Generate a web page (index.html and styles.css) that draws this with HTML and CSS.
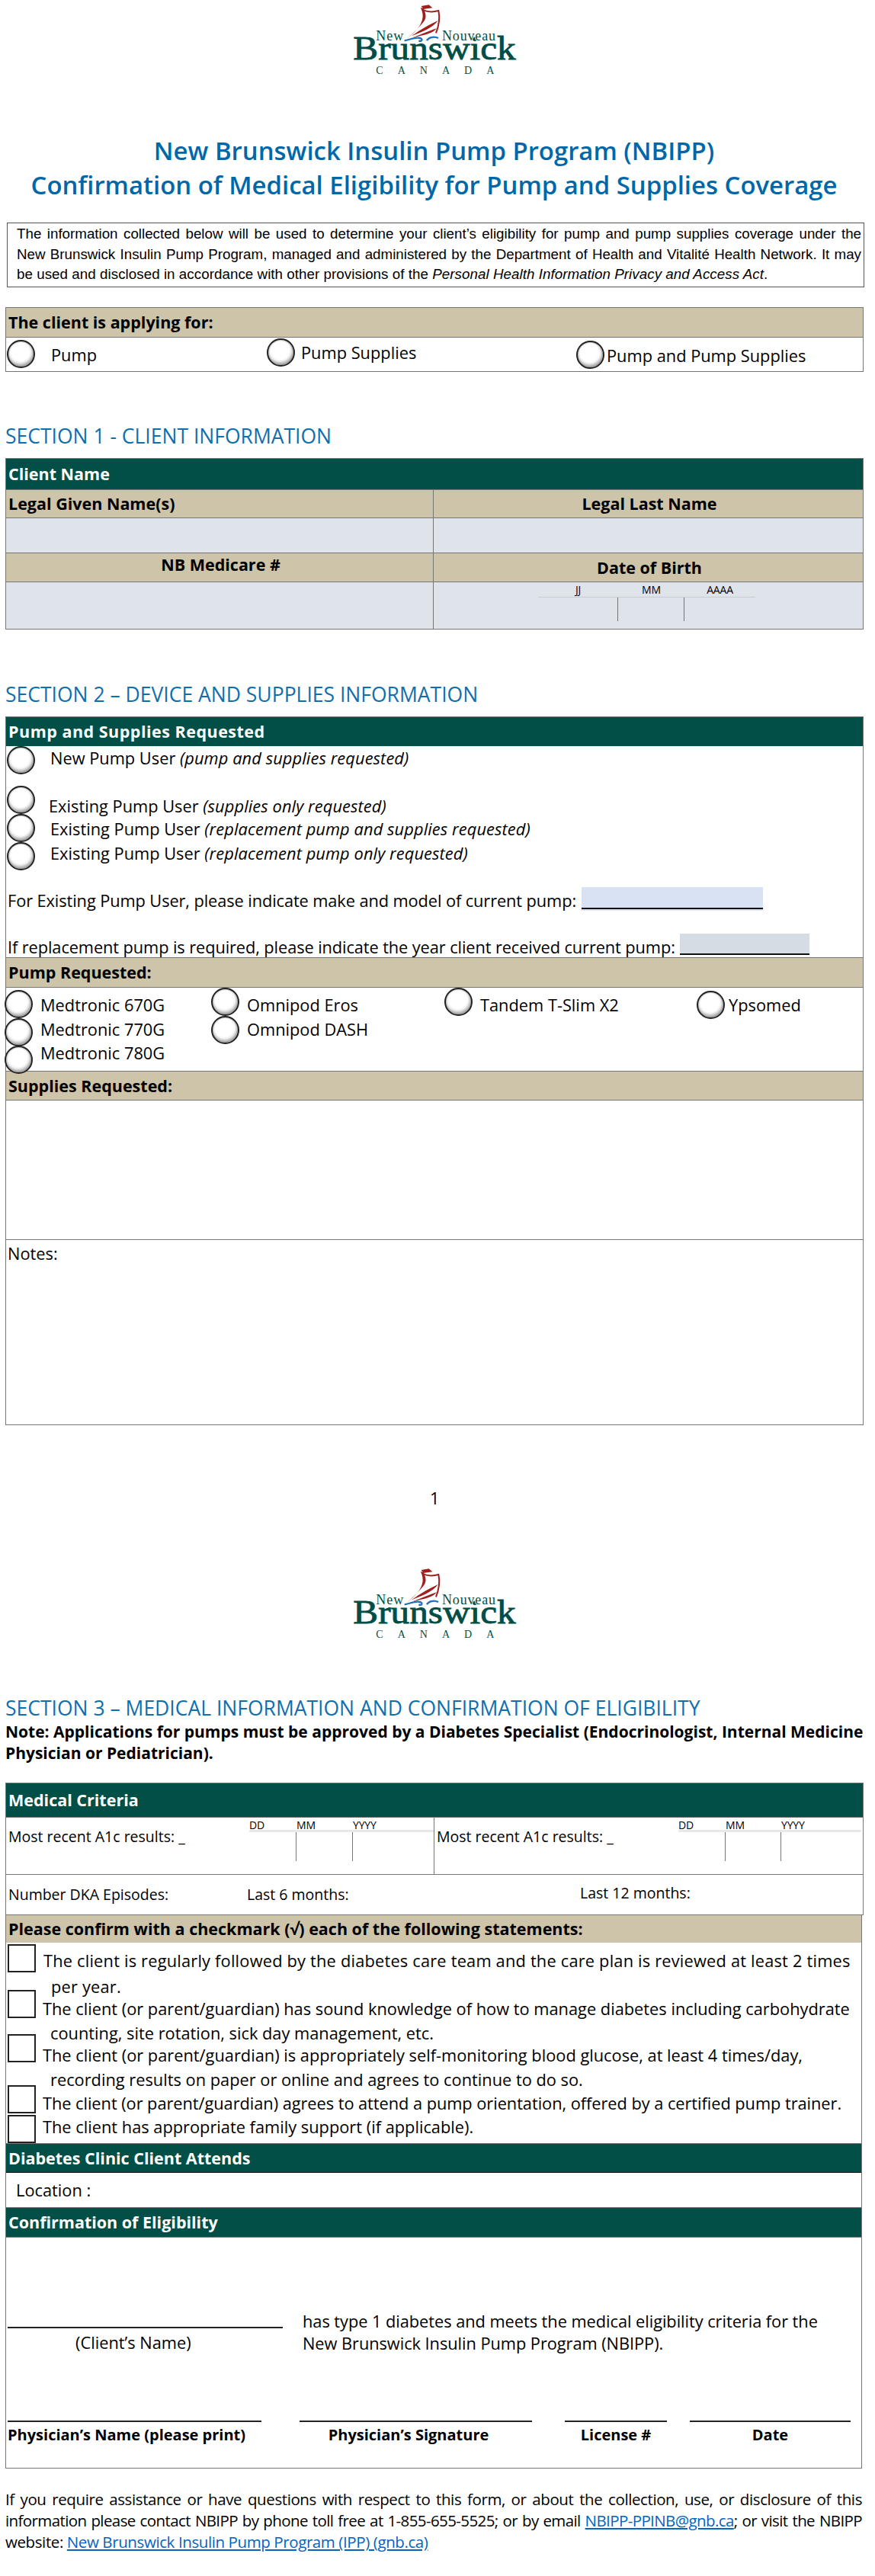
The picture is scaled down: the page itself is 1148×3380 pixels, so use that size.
FILE: index.html
```html
<!DOCTYPE html>
<html lang="en">
<head>
<meta charset="utf-8">
<title>NBIPP Confirmation of Medical Eligibility</title>
<link rel="stylesheet" href="styles.css">
</head>
<body>
<div class="page">
  <svg class="logo" viewBox="0 0 780 315" aria-label="New Brunswick Canada">
    <path class="sail" d="M338 24L368 19L382 31L346 36Z"/>
    <path class="sail" d="M335 30C352 62 350 100 282 152C318 120 330 105 342 92C366 70 352 48 348 34Z"/>
    <path class="sail-line" d="M340 36C360 48 385 48 406 42C412 70 408 100 396 130"/>
    <path class="sail" d="M300 142C335 115 375 95 405 80C380 112 340 125 300 142Z"/>
    <path class="sail" d="M285 155C330 140 370 120 398 112C385 135 330 140 285 155Z"/>
    <path class="wave" d="M272 160C300 155 310 145 335 150C345 155 340 165 328 160M405 150C385 140 365 150 360 160"/>
    <text class="logo-text logo-main" x="70" y="234" font-size="130" textLength="640" lengthAdjust="spacingAndGlyphs">Brunswick</text>
    <text class="logo-text logo-top" x="160" y="160" font-size="54" textLength="108">New</text>
    <text class="logo-text logo-top" x="420" y="160" font-size="54" textLength="210">Nouveau</text>
    <text class="logo-text" x="160" y="290" font-size="42" textLength="465">CANADA</text>
  </svg>
  <h1 class="title">New Brunswick Insulin Pump Program (NBIPP)<br>Confirmation of Medical Eligibility for Pump and Supplies Coverage</h1>
  <div class="info">
    <div class="jl">The information collected below will be used to determine your client’s eligibility for pump and pump supplies coverage under the</div>
    <div class="jl">New Brunswick Insulin Pump Program, managed and administered by the Department of Health and Vitalité Health Network. It may</div>
    <div class="il3">be used and disclosed in accordance with other provisions of the <em>Personal Health Information Privacy and Access Act</em>.</div>
  </div>

  <section class="frame apply">
    <div class="band tan h39">The client is applying for:</div>
    <div class="apply-row">
      <div class="opt a1"><span class="radio"></span><span>Pump</span></div>
      <div class="opt a2"><span class="radio"></span><span>Pump Supplies</span></div>
      <div class="opt a3"><span class="radio"></span><span>Pump and Pump Supplies</span></div>
    </div>
  </section>

  <h2 class="section s1">SECTION 1 - CLIENT INFORMATION</h2>
  <section class="frame client">
    <div class="band dark h41">Client Name</div>
    <div class="two">
      <div class="band tan h37 cell-l">Legal Given Name(s)</div>
      <div class="band tan h37 centered">Legal Last Name</div>
      <div class="fill h46 cell-l"></div>
      <div class="fill h46"></div>
      <div class="band tan h38 cell-l centered up">NB Medicare #</div>
      <div class="band tan h38 centered">Date of Birth</div>
      <div class="fill h62 cell-l"></div>
      <div class="fill h62">
        <div class="dob">
          <span class="mini">JJ</span><span class="mini">MM</span><span class="mini">AAAA</span>
          <span class="slot sep"></span><span class="slot sep"></span><span class="slot"></span>
        </div>
      </div>
    </div>
  </section>

  <h2 class="section s2">SECTION 2 – DEVICE AND SUPPLIES INFORMATION</h2>
  <section class="frame device">
    <div class="band dark h39 wide">Pump and Supplies Requested</div>
    <div class="opt u1"><span class="radio"></span><span>New Pump User <em>(pump and supplies requested)</em></span></div>
    <div class="opt u2"><span class="radio"></span><span>Existing Pump User <em>(supplies only requested)</em></span></div>
    <div class="opt u3"><span class="radio"></span><span>Existing Pump User <em>(replacement pump and supplies requested)</em></span></div>
    <div class="opt u4"><span class="radio"></span><span>Existing Pump User <em>(replacement pump only requested)</em></span></div>
    <div class="ask a-make"><span class="ask-label">For Existing Pump User, please indicate make and model of current pump:</span><span class="field f-make"></span></div>
    <div class="ask a-year"><span class="ask-label">If replacement pump is required, please indicate the year client received current pump:</span><span class="field f-year"></span></div>
    <div class="band tan h39">Pump Requested:</div>
    <div class="pumps">
      <div class="pump-col c1">
        <div class="opt p"><span class="radio dy-4"></span><span>Medtronic 670G</span></div>
        <div class="opt p"><span class="radio dy1"></span><span>Medtronic 770G</span></div>
        <div class="opt p"><span class="radio dy6"></span><span>Medtronic 780G</span></div>
      </div>
      <div class="pump-col c2">
        <div class="opt p"><span class="radio dy-7"></span><span>Omnipod Eros</span></div>
        <div class="opt p"><span class="radio dy-2"></span><span>Omnipod DASH</span></div>
      </div>
      <div class="pump-col c3">
        <div class="opt p"><span class="radio dy-7"></span><span>Tandem T-Slim X2</span></div>
      </div>
      <div class="pump-col c4">
        <div class="opt p"><span class="radio dy-3"></span><span>Ypsomed</span></div>
      </div>
    </div>
    <div class="band tan h38">Supplies Requested:</div>
    <div class="supplies"></div>
    <div class="notes">Notes:</div>
  </section>

  <div class="pageno">1</div>

  <svg class="logo logo2" viewBox="0 0 780 315" aria-label="New Brunswick Canada">
    <path class="sail" d="M338 24L368 19L382 31L346 36Z"/>
    <path class="sail" d="M335 30C352 62 350 100 282 152C318 120 330 105 342 92C366 70 352 48 348 34Z"/>
    <path class="sail-line" d="M340 36C360 48 385 48 406 42C412 70 408 100 396 130"/>
    <path class="sail" d="M300 142C335 115 375 95 405 80C380 112 340 125 300 142Z"/>
    <path class="sail" d="M285 155C330 140 370 120 398 112C385 135 330 140 285 155Z"/>
    <path class="wave" d="M272 160C300 155 310 145 335 150C345 155 340 165 328 160M405 150C385 140 365 150 360 160"/>
    <text class="logo-text logo-main" x="70" y="234" font-size="130" textLength="640" lengthAdjust="spacingAndGlyphs">Brunswick</text>
    <text class="logo-text logo-top" x="160" y="160" font-size="54" textLength="108">New</text>
    <text class="logo-text logo-top" x="420" y="160" font-size="54" textLength="210">Nouveau</text>
    <text class="logo-text" x="160" y="290" font-size="42" textLength="465">CANADA</text>
  </svg>

  <h2 class="section s3">SECTION 3 – MEDICAL INFORMATION AND CONFIRMATION OF ELIGIBILITY</h2>
  <p class="note">Note: Applications for pumps must be approved by a Diabetes Specialist (Endocrinologist, Internal Medicine<br>Physician or Pediatrician).</p>

  <section class="frame medical">
    <div class="band dark h45">Medical Criteria</div>
    <div class="a1c-row">
      <div class="a1c cell-l">
        <span class="a1c-text">Most recent A1c results: _</span>
        <div class="ymd ymd-l">
          <span class="mini-l">DD</span><span class="mini-l">MM</span><span class="mini-l">YYYY</span>
          <span class="slot2 sep"></span><span class="slot2 sep"></span><span class="slot2"></span>
        </div>
      </div>
      <div class="a1c">
        <span class="a1c-text">Most recent A1c results: _</span>
        <div class="ymd ymd-r">
          <span class="mini-l">DD</span><span class="mini-l">MM</span><span class="mini-l">YYYY</span>
          <span class="slot2 sep"></span><span class="slot2 sep"></span><span class="slot2"></span>
        </div>
      </div>
    </div>
    <div class="dka">
      <span class="dka-a">Number DKA Episodes:</span>
      <span class="dka-b">Last 6 months:</span>
      <span class="dka-c">Last 12 months:</span>
    </div>
  </section>

  <section class="frame confirm">
    <div class="band tan h37">Please confirm with a checkmark (√) each of the following statements:</div>
    <div class="stmt st1"><span class="box"></span><div class="lines"><div>The client is regularly followed by the diabetes care team and the care plan is reviewed at least 2 times</div><div class="hang">per year.</div></div></div>
    <div class="stmt st2"><span class="box"></span><div class="lines"><div>The client (or parent/guardian) has sound knowledge of how to manage diabetes including carbohydrate</div><div class="hang">counting, site rotation, sick day management, etc.</div></div></div>
    <div class="stmt st3"><span class="box"></span><div class="lines"><div>The client (or parent/guardian) is appropriately self-monitoring blood glucose, at least 4 times/day,</div><div class="hang">recording results on paper or online and agrees to continue to do so.</div></div></div>
    <div class="stmt st4"><span class="box"></span><div class="lines"><div>The client (or parent/guardian) agrees to attend a pump orientation, offered by a certified pump trainer.</div></div></div>
    <div class="stmt st5"><span class="box"></span><div class="lines"><div>The client has appropriate family support (if applicable).</div></div></div>
    <div class="band dark h38">Diabetes Clinic Client Attends</div>
    <div class="location">Location :</div>
    <div class="band dark h39">Confirmation of Eligibility</div>
    <div class="attest">
      <div class="attest-row">
        <div class="client-sign"><div class="sign-line"></div><div class="caption">(Client’s Name)</div></div>
        <div class="statement">has type 1 diabetes and meets the medical eligibility criteria for the<br>New Brunswick Insulin Pump Program (NBIPP).</div>
      </div>
      <div class="signs">
        <div class="sign g1">Physician’s Name (please print)</div>
        <div class="sign g2">Physician’s Signature</div>
        <div class="sign g3">License #</div>
        <div class="sign g4">Date</div>
      </div>
    </div>
  </section>

  <div class="foot">
    <div class="jl fl1">If you require assistance or have questions with respect to this form, or about the collection, use, or disclosure of this</div>
    <div class="jl fl2">information please contact NBIPP by phone toll free at 1-855-655-5525; or by email <a href="#">NBIPP-PPINB@gnb.ca</a>; or visit the NBIPP</div>
    <div class="fl3">website: <a href="#">New Brunswick Insulin Pump Program (IPP) (gnb.ca)</a></div>
  </div>
</div>
</body>
</html>
```
FILE: styles.css
```css
* { box-sizing: border-box; }
html, body { margin: 0; padding: 0; background: #fff; }
body { font-family: "Open Sans", "Noto Sans", sans-serif; font-size: 21.8px; line-height: 30px; color: #000; }
.page { width: 1148px; height: 3380px; overflow: hidden; }

.logo { display: block; width: 260px; height: 105px; margin-left: 440px; }
.logo2 { margin-top: 71px; }
.sail { fill: #a01f1e; }
.sail-line { fill: none; stroke: #a01f1e; stroke-width: 6; }
.wave { fill: none; stroke: #1f71b8; stroke-width: 7; }
.logo-text { font-family: "Liberation Serif", serif; fill: #024e46; }
.logo-main { stroke: #024e46; stroke-width: 2.5; }
.logo-top { stroke: #fff; stroke-width: 5; paint-order: stroke; }

.title { margin: 70px 0 0; width: 1139px; font-size: 32.9px; font-weight: 600; line-height: 45px; text-align: center; color: #0068a8; white-space: nowrap; }

.info { margin: 27px 0 0 9px; width: 1125px; height: 85px; border: 1.5px solid #555; padding: 1px 3px 0 12px; font-family: "Liberation Sans", sans-serif; font-size: 18.75px; line-height: 26.6px; }
.il3 { letter-spacing: 0.05px; }
.jl { text-align: justify; text-align-last: justify; white-space: nowrap; }

.frame { margin-left: 7px; width: 1126px; border: 1px solid #767676; border-top: 0; }
.apply { margin-top: 26px; }

.band { padding-left: 3px; font-size: 21.5px; font-weight: 700; display: flex; align-items: center; border-top: 1px solid #767676; }
.wide { letter-spacing: 0.5px; }
.tan { background: #cec4a9; }
.dark { background: #024f47; color: #fff; }
.h37 { height: 37px; } .h38 { height: 38px; } .h39 { height: 39px; } .h41 { height: 41px; } .h45 { height: 45px; }
.centered { justify-content: center; }
.up { padding-bottom: 8px; }

.apply-row { height: 45px; border-top: 1px solid #767676; display: flex; }
.opt { display: flex; align-items: flex-start; }
.opt em { letter-spacing: 0.1px; }
.radio { flex: none; width: 37px; height: 37px; border-radius: 50%; border: 2.5px solid #222; background: #fff; box-shadow: inset -1px -3px 4px #9a9a9a, inset 0 0 2px #777; }

.a1 { width: 342px; padding: 3px 0 0 1px; }
.a1 span:last-child { margin: 5px 0 0 21px; }
.a2 { width: 406px; padding: 1px 0 0 0; }
.a2 span:last-child { margin: 4px 0 0 8px; }
.a3 { padding: 4px 0 0 0; }
.a3 span:last-child { margin: 5px 0 0 3px; }

.section { margin: 0; font-size: 26.5px; font-weight: 400; line-height: 32px; color: #0f6fae; padding-left: 7px; white-space: nowrap; }
.s1 { margin-top: 68px; }
.client { margin-top: 13px; }
.two { display: grid; grid-template-columns: 561px 1fr; }
.cell-l { border-right: 1px solid #767676; }
.fill { background: #dfe3ea; border-top: 1px solid #767676; }
.h46 { height: 46px; } .h62 { height: 62px; }
.dob { margin-left: 137px; width: 285px; display: grid; grid-template-columns: 105px 87px 93px; grid-template-rows: 20px 31px; }
.mini { font-size: 14px; letter-spacing: -0.2px; line-height: 20px; text-align: center; border-bottom: 1px solid #c8ccce; }
.slot { display: block; }
.sep { border-right: 1px solid #767676; }

.s2 { margin-top: 69px; }
.device { margin-top: 13px; height: 930px; }
.device .opt { padding-left: 1px; }
.u1 { height: 64px; } .u1 > span:last-child { margin: 1px 0 0 20px; }
.u2 { height: 30px; } .u2 .radio { margin-top: -12px; } .u2 > span:last-child { margin-left: 18px; }
.u3 { height: 31px; } .u3 .radio { margin-top: -5px; } .u3 > span:last-child { margin-left: 20px; }
.u4 { height: 60px; } .u4 .radio { margin-top: 1px; } .u4 > span:last-child { margin: 1px 0 0 20px; }
.ask { display: flex; padding-left: 2px; align-items: flex-start; line-height: 36px; }
.ask-label { white-space: nowrap; letter-spacing: -0.1px; }
.a-make { height: 61px; }
.a-make .ask-label { width: 753px; }
.a-year { height: 31px; }
.a-year .ask-label { width: 882px; }
.field { flex: none; display: block; background: #d9e2f3; border-bottom: 2px solid #111; }
.f-make { width: 238px; height: 29px; box-shadow: 0 2px 0 #d9e2f3; }
.f-year { width: 170px; height: 28px; background: #d6dce4; }

.pumps { height: 110px; padding-top: 7px; display: grid; grid-template-columns: 269px 306px 331px 1fr; border-top: 1px solid #767676; }
.device .opt.p { height: 31.5px; padding-left: 0; }
.p span:last-child { line-height: 32px; margin-left: 10px; white-space: nowrap; }
.c1 .radio { margin-left: -2px; }
.c4 .p span:last-child { margin-left: 5px; }
.dy-7 { margin-top: -7px; } .dy-4 { margin-top: -4px; } .dy-3 { margin-top: -3px; } .dy-2 { margin-top: -2px; } .dy1 { margin-top: 1px; } .dy6 { margin-top: 6px; }
.supplies { height: 183px; border-top: 1px solid #767676; }
.notes { height: 243px; border-top: 1px solid #767676; padding-left: 2px; line-height: 36px; }

.pageno { margin-top: 81px; height: 30px; padding-left: 564px; }

.s3 { margin-top: 68px; }
.note { margin: 1px 0 0; padding-left: 7px; font-weight: 700; font-size: 21px; line-height: 28px; white-space: nowrap; }
.medical { margin-top: 25px; }
.a1c-row { height: 75px; display: grid; grid-template-columns: 562px 1fr; border-top: 1px solid #767676; }
.a1c { display: flex; justify-content: space-between; padding-left: 3px; }
.a1c-text { font-size: 19.5px; line-height: 50px; white-space: nowrap; }
.ymd { display: grid; grid-template-rows: 19px 38px; }
.ymd-l { width: 242px; grid-template-columns: 62px 74px 106px; }
.ymd-r { width: 240px; grid-template-columns: 62px 73px 105px; margin-right: 2px; }
.mini-l { font-size: 14px; letter-spacing: -0.2px; line-height: 20px; border-bottom: 3px solid #e8e8e8; }
.slot2 { display: block; }
.dka { height: 53px; display: flex; align-items: flex-start; border-top: 1px solid #767676; padding-left: 3px; font-size: 19.5px; line-height: 52px; }
.dka-a { width: 313px; }
.dka-b { width: 437px; }
.dka-c { margin-top: -2px; }

.confirm { width: 1124px; margin-top: -1px; }
.stmt { display: flex; padding-left: 2px; align-items: flex-start; white-space: nowrap; }
.box { flex: none; width: 37px; height: 37px; border: 2.5px solid #222; background: #fff; }
.lines { flex: 1; }
.hang { padding-left: 10px; }
.st1 { line-height: 34px; margin-top: 7px; letter-spacing: 0.2px; } .st1 .box { margin-top: -5px; } .st1 .lines { margin-left: 10px; }
.st2 { line-height: 32px; margin-top: -4px; } .st2 .box { margin-top: -9px; } .st2 .lines { margin-left: 9px; }
.st3 { line-height: 32px; margin-top: -3px; } .st3 .box { margin-top: -12px; } .st3 .lines { margin-left: 9px; }
.st4 { line-height: 31px; margin-top: -1px; letter-spacing: -0.05px; } .st4 .box { margin-top: -8px; } .st4 .lines { margin-left: 9px; }
.st5 { line-height: 31px; height: 37px; } .st5 .lines { margin-left: 9px; }
.location { height: 46px; padding-left: 13px; line-height: 46px; border-top: 1px solid #111; }
.attest { height: 303px; padding-left: 2px; border-top: 1px solid #767676; }
.attest-row { display: flex; padding-top: 95px; }
.client-sign { width: 361px; }
.sign-line { height: 24px; border-bottom: 2px solid #222; }
.caption { padding-left: 89px; line-height: 28px; margin-top: 5px; }
.statement { margin-left: 26px; line-height: 29px; letter-spacing: -0.05px; white-space: nowrap; }
.signs { display: flex; margin-top: 87px; }
.sign { border-top: 2px solid #222; font-weight: 700; line-height: 34px; font-size: 20px; white-space: nowrap; }
.g1 { width: 333px; }
.g2 { width: 305px; margin-left: 50px; padding-right: 19px; text-align: center; }
.g3 { width: 134px; margin-left: 43px; text-align: center; }
.g4 { width: 211px; margin-left: 30px; text-align: center; }

.foot { margin: 26px 0 0 7px; width: 1124px; line-height: 28px; font-size: 20.5px; }
.fl1 { letter-spacing: -0.4px; }
.fl2 { letter-spacing: -0.6px; }
.fl3 { letter-spacing: -0.4px; }
.foot a { color: #0563c1; text-decoration: underline; }
```
